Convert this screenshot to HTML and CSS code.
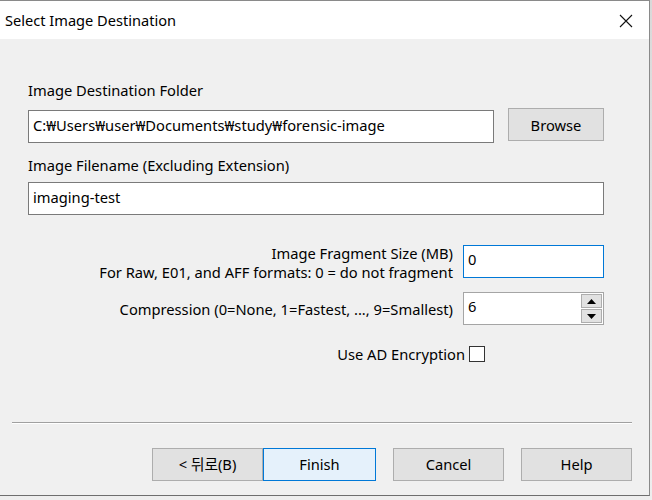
FILE: index.html
```html
<!DOCTYPE html>
<html>
<head>
<meta charset="utf-8">
<link rel="stylesheet" href="styles.css">
</head>
<body>
<div class="window">
  <div class="titlebar">
    <span class="title">Select Image Destination</span>
    <svg class="close" width="14" height="14" viewBox="0 0 14 14"><path d="M1 1 L13 13 M13 1 L1 13" stroke="#111" stroke-width="1.1" fill="none"/></svg>
  </div>
  <div class="body">
    <div class="label l1">Image Destination Folder</div>
    <div class="row r1">
      <div class="input wide">C:₩Users₩user₩Documents₩study₩forensic-image</div>
      <div class="btn browse">Browse</div>
    </div>
    <div class="label l2">Image Filename (Excluding Extension)</div>
    <div class="input full">imaging-test</div>
    <div class="frow frag">
      <div class="rlabel">Image Fragment Size (MB)<br>For Raw, E01, and AFF formats: 0 = do not fragment</div>
      <div class="input small focus">0</div>
    </div>
    <div class="frow comp">
      <div class="rlabel">Compression (0=None, 1=Fastest, ..., 9=Smallest)</div>
      <div class="spin">
        <span class="spinval">6</span>
        <div class="arrows">
          <div class="arr"><svg width="9" height="5" viewBox="0 0 9 5"><path d="M4.5 0 L9 5 L0 5Z" fill="#000"/></svg></div>
          <div class="arr"><svg width="9" height="5" viewBox="0 0 9 5"><path d="M0 0 L9 0 L4.5 5Z" fill="#000"/></svg></div>
        </div>
      </div>
    </div>
    <div class="crow">
      <span>Use AD Encryption</span><span class="check"></span>
    </div>
    <div class="sep"></div>
    <div class="buttons">
      <div class="btn bb">&lt;&nbsp;뒤로(B)</div>
      <div class="btn bb primary">Finish</div>
      <div class="btn bb gap">Cancel</div>
      <div class="btn bb gap2">Help</div>
    </div>
  </div>
</div>
</body>
</html>
```
FILE: styles.css
```css
html, body { margin: 0; padding: 0; }
body {
  width: 652px; height: 500px; overflow: hidden;
  background: linear-gradient(#d9d9d9, #eeeeee);
  font-family: "Noto Sans", "Noto Sans CJK KR", sans-serif;
  font-size: 14.7px; color: #000;
}
.window {
  width: 649px; height: 494px;
  border-top: 1px solid #8a8a8a;
  border-right: 1px solid #8a8a8a;
  border-bottom: 1px solid #6e6e6e;
  background: #f0f0f0;
  display: flex; flex-direction: column;
}
.titlebar {
  height: 38px; background: #fff; flex-shrink: 0;
  display: flex; align-items: center; justify-content: space-between;
  padding: 0 16px 0 5px;
}
.title { font-size: 14.6px; }
.close { margin-top: 1px; }
.body {
  padding: 0 45px 0 28px;
  display: flex; flex-direction: column;
}
.label { height: 20px; line-height: 20px; }
.l1 { margin-top: 41px; }
.row { display: flex; align-items: flex-start; margin-top: 8px; }
.input {
  box-sizing: border-box; height: 33px; background: #fff;
  border: 1px solid #7a7a7a; padding: 0 4px; line-height: 29px;
  flex-shrink: 0;
}
.wide { width: 466px; margin-top: 2px; }
.btn {
  box-sizing: border-box; background: #e1e1e1; border: 1px solid #adadad;
  display: flex; align-items: center; justify-content: center;
  flex-shrink: 0;
}
.browse { width: 96px; height: 33px; margin-left: 14px; }
.l2 { margin-top: 12px; }
.full { width: 576px; margin-top: 7px; }
.frow { display: flex; justify-content: flex-end; align-items: flex-start; }
.rlabel { text-align: right; line-height: 19px; margin-right: 10px; white-space: nowrap; }
.frag { margin-top: 30px; height: 33px; }
.frag .rlabel { margin-top: -1px; }
.small { width: 141px; height: 33px; line-height: 27px; padding-left: 4px; }
.focus { border-color: #0078d7; }
.comp { margin-top: 14px; }
.comp .rlabel { margin-top: 8px; }
.spin {
  box-sizing: border-box; width: 141px; height: 33px; background: #fff;
  border: 1px solid #a5a5a5; display: flex; justify-content: space-between;
}
.spinval { padding: 0 4px; line-height: 27px; }
.arrows { width: 21px; display: flex; flex-direction: column; gap: 1px; padding: 1px 1px 1px 0; }
.arr {
  flex: 1; background: #e1e1e1; border: 1px solid #adadad;
  display: flex; align-items: center; justify-content: center;
}
.crow { display: flex; justify-content: flex-end; align-items: center; margin-top: 19px; margin-right: 119px; height: 20px; }
.check {
  width: 14px; height: 14px; border: 1px solid #333; background: #fff; margin-left: 4px;
}
.sep {
  margin: 58px -28px 0 -16px; height: 1px; background: #a0a0a0;
  border-bottom: 1px solid #fff;
}
.buttons { display: flex; margin: 24px -28px 0 0; padding-left: 124px; }
.bb { width: 111px; height: 33px; padding-bottom: 2px; }
.primary { background: #e5f1fb; border-color: #0078d7; width: 113px; }
.gap { margin-left: 17px; }
.gap2 { margin-left: 17px; }
```
